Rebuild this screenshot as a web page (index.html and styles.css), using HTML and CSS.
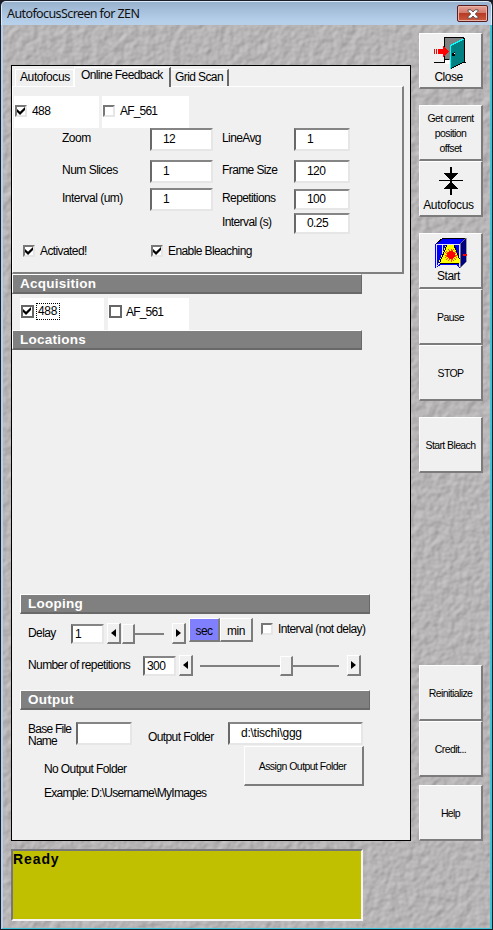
FILE: index.html
```
<!DOCTYPE html>
<html lang="en">
<head>
<meta charset="utf-8">
<title>AutofocusScreen for ZEN</title>
<link rel="stylesheet" href="styles.css">
</head>
<body>
<div class="window">
  <header class="titlebar">
    <span class="title">AutofocusScreen for ZEN</span>
    <button class="win-close" aria-label="Close window">
      <svg width="12" height="10" viewBox="0 0 12 10"><path d="M1 .8h3l2 2.200 2-2.200h3v1.400L8.300 5 11 7.800v1.400H8L6 7 4 9.200H1V7.800L3.700 5 1 2.200z" fill="#fff" stroke="#56484c" stroke-width=".9"/></svg>
    </button>
  </header>
  <div class="client">
    <svg class="stone" width="487" height="903">
      <filter id="stone" x="0" y="0" width="100%" height="100%" color-interpolation-filters="sRGB">
        <feTurbulence type="fractalNoise" baseFrequency=".12" numOctaves="2" seed="4"/>
        <feDiffuseLighting surfaceScale=".75" diffuseConstant="1" lighting-color="#d3d0d2"><feDistantLight azimuth="225" elevation="60"/></feDiffuseLighting>
      </filter>
      <rect width="487" height="903" filter="url(#stone)"/>
    </svg>
    <main class="left">
      <section class="panel">
        <nav class="tabs">
          <span class="tab">Autofocus</span>
          <span class="tab active">Online Feedback</span>
          <span class="tab last">Grid Scan</span>
        </nav>
        <div class="tab-page">
          <div class="tracks first">
            <label class="track a"><span class="check on"></span>488</label>
            <label class="track b"><span class="check"></span>AF_561</label>
          </div>
          <div class="fields">
            <div class="col labels-a"><span>Zoom</span><span class="r2">Num Slices</span><span class="r3">Interval (um)</span></div>
            <div class="col boxes-a"><span class="box">12</span><span class="box r2">1</span><span class="box r3">1</span></div>
            <div class="col labels-b"><span>LineAvg</span><span class="r2">Frame Size</span><span class="r3">Repetitions</span><span class="r4">Interval (s)</span></div>
            <div class="col boxes-b"><span class="box">1</span><span class="box r2">120</span><span class="box short r3">100</span><span class="box short r4">0.25</span></div>
          </div>
          <div class="options">
            <label class="opt act"><span class="check on"></span>Activated!</label>
            <label class="opt"><span class="check on"></span>Enable Bleaching</label>
          </div>
        </div>
        <h2 class="bar">Acquisition</h2>
        <div class="tracks second">
          <label class="track a"><span class="check flat on"></span><span class="focus">488</span></label>
          <label class="track b"><span class="check flat"></span>AF_561</label>
        </div>
        <h2 class="bar">Locations</h2>
        <div class="locations"></div>
        <h2 class="bar inset">Looping</h2>
        <div class="row delay">
          <span class="lbl">Delay</span>
          <span class="num">1</span>
          <span class="arrow"><svg width="5" height="8"><path d="M5 0v8L0 4z"/></svg></span>
          <span class="slider s1"><b class="thumb"></b></span>
          <span class="arrow"><svg width="5" height="8"><path d="M0 0v8L5 4z"/></svg></span>
          <span class="unit sel">sec</span><span class="unit min">min</span>
          <label class="opt not-delay"><span class="check"></span>Interval (not delay)</label>
        </div>
        <div class="row reps">
          <span class="lbl">Number of repetitions</span>
          <span class="num">300</span>
          <span class="arrow"><svg width="5" height="8"><path d="M5 0v8L0 4z"/></svg></span>
          <span class="slider s2"><b class="thumb"></b></span>
          <span class="arrow"><svg width="5" height="8"><path d="M0 0v8L5 4z"/></svg></span>
        </div>
        <h2 class="bar inset">Output</h2>
        <div class="row output">
          <span class="base">Base File<br>Name</span>
          <span class="box name"></span>
          <span class="folder-label">Output Folder</span>
          <span class="box folder">d:\tischi\ggg</span>
        </div>
        <div class="row assign">
          <div class="notes"><p>No Output Folder</p><p>Example: D:\Username\MyImages</p></div>
          <button class="btn wide">Assign Output Folder</button>
        </div>
      </section>
      <section class="status">Ready</section>
    </main>
    <aside class="side">
      <button class="btn icon">
        <svg width="33" height="33" viewBox="0 0 33 33" shape-rendering="crispEdges">
          <path d="M10 1h20v25H10z" fill="#808080"/>
          <path d="M11 23h5v4h-5z" fill="#fff"/>
          <path d="M0 25.500h10.500V.5h19v25H32M10 22.500h5" fill="none" stroke="#000"/>
          <path d="M16 9L30 2v23L16 32z" fill="#008080" stroke="#000"/>
          <path d="M16.500 32V8.500L29.500 2" fill="none" stroke="#0ff" stroke-width="1.300"/>
          <path d="M18 16h2v3h-2zM20 15h1v4h-1z"/><path d="M20 16h1v1h-1z" fill="#fff"/>
          <path d="M0 12h1v5H0zM2 12h1v5H2zM4 12h5V9h1l5 5.500-5 5.500H9v-3H4z" fill="#f00"/>
        </svg><span class="ic-text">Close</span>
      </button>
      <button class="btn gap">Get current<br>position<br>offset</button>
      <button class="btn icon af">
        <svg width="24" height="28" viewBox="0 0 24 28" shape-rendering="crispEdges"><path d="M11 0h2v28h-2zM0 13h24v1H0zM5 6h14l-7 8 7 8H5l7-8z"/></svg><span class="ic-text af-text">Autofocus</span>
      </button>
      <button class="btn icon gap">
        <svg width="32" height="32" viewBox="0 0 32 32" shape-rendering="crispEdges">
          <path d="M1 7l7-6h23l-6 6z" fill="#00f" stroke="#000"/>
          <path d="M25 7l6-6v24l-6 6z" fill="#000080" stroke="#888" stroke-width=".8"/>
          <path d="M0 7h25v24l-4-3H6l-5 3H0z" fill="#00f"/>
          <path d="M7.500 8v14l-6 8V7.500h23V30" fill="none" stroke="#e4e4f4"/>
          <path d="M11 8h9l5 15v3H4v-2z" fill="#ff0"/>
          <path d="M4.500 26L12 8M19 8l5.500 14M5 26.500h19" stroke="#000" fill="none"/>
          <path d="M16 11.500v13M9.500 18H23M11.500 13.500l9 9M20.500 13.500l-9 9M13.500 12l5 12M18.500 12l-5 12M10 15.500l12 5M22 15.500l-12 5" stroke="#f00" stroke-width=".7"/>
          <circle cx="16" cy="18" r="4" fill="#f00"/>
          <path d="M28 17h4v2h-4z" fill="#f00"/>
        </svg><span class="ic-text">Start</span>
      </button>
      <button class="btn">Pause</button>
      <button class="btn">STOP</button>
      <button class="btn gap">Start Bleach</button>
      <button class="btn far">Reinitialize</button>
      <button class="btn">Credit...</button>
      <button class="btn near">Help</button>
    </aside>
  </div>
</div>
</body>
</html>
```
FILE: styles.css
```
* { box-sizing: border-box; }
body { margin: 0; width: 493px; height: 930px; overflow: hidden; background: #000; }
button { font: inherit; color: inherit; padding: 0; margin: 0; border: 0; border-radius: 0; }
svg { flex: none; }

.window {
  width: 493px; height: 930px; padding: 1px; display: flex; flex-direction: column;
  background: #1b1d26; color: #000;
  font: 12px/14px "Liberation Sans", Arial, sans-serif; letter-spacing: -.6px; white-space: nowrap;
}
.titlebar {
  height: 24px; flex: none; display: flex; justify-content: space-between; align-items: flex-start;
  background: linear-gradient(#98b1cd, #b3cce7 75%, #b7d1eb);
  border: solid #dcebfa; border-width: 1px 1px 0; border-radius: 5px 5px 0 0;
  padding: 3px 3px 0 5px;
}
.title { font: 12.500px/18px "Noto Sans", "Open Sans", sans-serif; letter-spacing: -.6px; color: #111; }
.win-close {
  width: 31px; height: 17px; border: 1px solid #5a1c1c; border-radius: 2px;
  display: flex; align-items: center; justify-content: center;
  background: linear-gradient(#e6a295, #d07a6b 45%, #b83a22 50%, #c95b40);
  box-shadow: inset 0 0 0 1px #e9b3a8;
}
.client {
  position: relative; flex: 1; display: flex;
  border: solid #3cc3dc; border-width: 0 2px 1px 2px; border-left-color: #b5d0ee; background: #b5b3b5;
}
.stone { position: absolute; left: 0; top: 0; width: 487px; height: 903px; }
.left { position: relative; width: 400px; margin: 40px 0 0 8px; }
.panel { height: 776px; border: 1px solid #000; background: #f0f0f0; }

.tabs { display: flex; align-items: flex-end; height: 20px; padding: 1px 0 0 3px; }
.tab { position: relative; height: 17px; width: 59px; padding: 0 0 0 4px; border: 1px solid #fff; border-bottom: 0; letter-spacing: -.4px; }
.tab.active { height: 20px; width: 97px; padding: 0 0 0 6px; border-right: 2px solid #696969; margin-bottom: -1px; background: #f0f0f0; z-index: 1; letter-spacing: -.6px; }
.tab.last { border-right: 2px solid #696969; border-left: 0; width: 58px; padding-left: 4px; letter-spacing: -.6px; }
.tab-page {
  width: 392px; height: 188px; border: 1px solid #fff;
  border-right: 2px solid #808080; border-bottom: 2px solid #808080;
}
.tracks { display: flex; }
.track { display: flex; align-items: center; gap: 5px; height: 32px; background: #fff; padding: 0 0 2px 1px; }
.first { margin: 9px 0 0 1px; gap: 3px; }
.first .a { width: 85px; }
.first .b { width: 87px; }
.second { margin: 4px 0 0 8px; gap: 4px; height: 32px; }
.second .a { width: 84px; }
.second .b { width: 81px; gap: 4px; }
.second .track { padding-bottom: 5px; }
.track.b { letter-spacing: -.8px; }
.check {
  flex: none; width: 12px; height: 12px; background: #fff;
  border: 2px solid; border-color: #777 #e6e6e6 #e6e6e6 #777;
  display: flex;
}
.check.flat { width: 13px; height: 13px; border-color: #666; }
.check.on::after { content: ""; width: 8px; height: 8px; background: #000; clip-path: polygon(0 25%, 38% 60%, 100% 0, 100% 38%, 38% 100%, 0 62%); }
.focus { outline: 1px dotted #000; height: 15px; padding: 0 2px 0 1px; margin-left: -2px; letter-spacing: -.3px; }

.fields { display: flex; height: 112px; }
.col { display: flex; flex-direction: column; }
.labels-a, .labels-b { padding-top: 3px; }
.labels-a { width: 88px; margin-left: 49px; letter-spacing: -.5px; }
.labels-a .r2, .labels-b .r2 { margin-top: 18px; }
.labels-a .r3, .labels-b .r3 { margin-top: 14px; }
.labels-b .r4 { margin-top: 10px; }
.labels-b { width: 72px; margin-left: 9px; }
.box {
  display: block; width: 63px; height: 23px; background: #fff; padding: 2px 0 0 11px;
  border: 2px solid; border-color: #858585 #e6e6e6 #e6e6e6 #696969;
}
.box.r2 { margin-top: 9px; }
.box.r3 { margin-top: 5px; }
.boxes-b .box { width: 56px; }
.box.short { height: 21px; padding-top: 1px; }
.boxes-b .r3 { margin-top: 6px; }
.boxes-b .r4 { margin-top: 3px; }
.options { display: flex; padding: 4px 0 0 10px; }
.opt { display: flex; align-items: center; gap: 5px; }
.act { width: 128px; }

.bar {
  width: 350px; height: 20px; margin: 0; padding: 0 0 0 7px; background: #808080; color: #fff;
  border: 1px solid #fff; border-right: 1px solid #696969; border-bottom: 2px solid #696969;
  font: bold 13.500px/17px "Liberation Sans", Arial, sans-serif; letter-spacing: .25px;
}
.locations { height: 244px; }
.inset { margin-left: 8px; }

.row { display: flex; }
.delay { height: 34px; padding: 9px 0 0 16px; }
.delay .lbl { width: 43px; padding-top: 3px; }
.num { width: 33px; height: 20px; background: #fff; padding: 1px 2px; border: 2px solid; border-color: #858585 #e6e6e6 #e6e6e6 #696969; margin-right: 3px; }
.delay .num { margin-top: 1px; }
.arrow, .thumb, .unit, .btn { background: #f0f0f0; border: solid; border-width: 1px 2px 2px 1px; border-color: #fff #7c7c7c #7c7c7c #fff; }
.arrow { width: 14px; height: 21px; display: flex; align-items: center; justify-content: center; }
.slider { display: flex; align-items: center; height: 21px; background: linear-gradient(#808080, #808080) center / 100% 2px no-repeat; }
.thumb { display: block; width: 13px; height: 20px; }
.s1 { width: 42px; margin-right: 8px; margin-left: 1px; }
.s2 { width: 139px; margin: 0 8px 0 7px; }
.s2 .thumb { margin-left: 80px; }
.unit { width: 31px; height: 24px; margin: -5px 0 0 3px; padding-top: 5px; text-align: center; letter-spacing: -.5px; }
.unit.sel { background: #8080ff; }
.unit.min { width: 33px; margin-left: 0; }
.not-delay { height: 13px; margin: -1px 0 0 8px; }
.reps { height: 42px; padding: 7px 0 0 16px; }
.reps .lbl { width: 115px; padding-top: 3px; }
.reps .num { margin-top: 1px; }
.output { height: 36px; padding: 12px 0 0 16px; }
.base { width: 48px; line-height: 12px; padding-top: 1px; letter-spacing: -.75px; }
.box.name { width: 56px; }
.folder-label { width: 80px; margin-left: 16px; padding-top: 8px; }
.box.folder { width: 135px; letter-spacing: -.25px; }
.notes { width: 232px; padding: 16px 0 0 32px; }
.notes p { margin: 0 0 10px; }
.notes p + p { letter-spacing: -.7px; }
.status {
  width: 352px; height: 72px; margin-top: 8px; background: #c0c000;
  border: 2px solid; border-color: #777 #f4f4f4 #f4f4f4 #777;
  font: bold 14px/17px "Liberation Sans", Arial, sans-serif; letter-spacing: .9px;
}

.side { position: relative; width: 64px; margin: 8px 0 0 8px; display: flex; flex-direction: column; }
.btn { flex: none; width: 64px; height: 56px; text-align: center; font: 10.500px/15px "Liberation Sans", Arial, sans-serif; letter-spacing: -.6px; white-space: nowrap; padding-top: 1px; }
.btn.wide { width: 120px; height: 40px; letter-spacing: -.55px; padding-right: 2px; }
.gap { margin-top: 16px; }
.far { margin-top: 192px; }
.near { margin-top: 8px; }
.icon { display: flex; flex-direction: column; align-items: center; padding-top: 3px; }
.ic-text { font-size: 12px; line-height: 14px; letter-spacing: -.5px; margin-right: 4px; }
.af { padding-top: 5px; }
.af-text { margin-top: 3px; letter-spacing: -.3px; }
```
